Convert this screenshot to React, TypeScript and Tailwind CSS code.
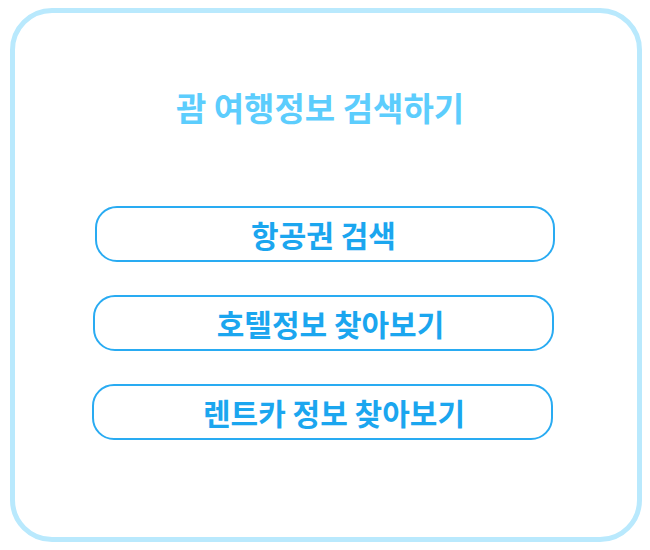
import React from "react";

const font = { fontFamily: '"Noto Sans CJK KR", "Noto Sans", sans-serif' };

export default function App() {
  return (
    <div
      className="w-[650px] h-[550px] bg-white pt-[8px] pl-[10px]"
      style={font}
    >
      <div className="w-[632px] h-[534px] border-[5px] border-[#b9e9fd] rounded-[42px] flex flex-col items-start">
        <h1 className="w-full text-center text-[33px] leading-[40px] font-bold text-[#5ccdfd] mt-[74px] pr-[12px]">
          괌 여행정보 검색하기
        </h1>
        <button className="mt-[79px] ml-[80px] w-[460px] h-[56px] border-2 border-[#29abf2] rounded-[22px] flex items-center justify-center bg-white">
          <span className="text-[30px] leading-[36px] font-bold text-[#1ba6ef] mr-[3px]">
            항공권 검색
          </span>
        </button>
        <button className="mt-[33px] ml-[78px] w-[461px] h-[56px] border-2 border-[#29abf2] rounded-[22px] flex items-center justify-center bg-white">
          <span className="text-[30px] leading-[36px] font-bold text-[#1ba6ef] ml-[14px]">
            호텔정보 찾아보기
          </span>
        </button>
        <button className="mt-[33px] ml-[77px] w-[461px] h-[56px] border-2 border-[#29abf2] rounded-[22px] flex items-center justify-center bg-white">
          <span className="text-[30px] leading-[36px] font-bold text-[#1ba6ef] ml-[23px]">
            렌트카 정보 찾아보기
          </span>
        </button>
      </div>
    </div>
  );
}
